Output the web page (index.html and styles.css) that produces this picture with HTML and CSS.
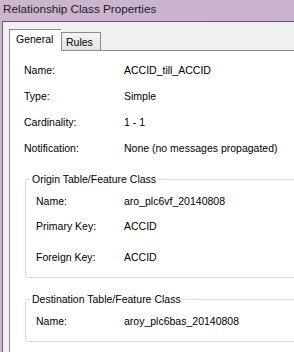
FILE: index.html
```html
<!DOCTYPE html>
<html lang="en">
<head>
  <meta charset="UTF-8">
  <title>Relationship Class Properties</title>
  <link rel="stylesheet" href="styles.css">
</head>
<body>

  <div class="window">
    <div class="titlebar">Relationship Class Properties</div>

    <div class="frame">
      <div class="tabs">
        <div class="tab active">General</div>
        <div class="tab">Rules</div>
      </div>

      <div class="panel">
        <div class="props">
          <div class="row"><span class="label">Name:</span><span>ACCID_till_ACCID</span></div>
          <div class="row"><span class="label">Type:</span><span>Simple</span></div>
          <div class="row"><span class="label">Cardinality:</span><span>1 - 1</span></div>
          <div class="row"><span class="label">Notification:</span><span>None (no messages propagated)</span></div>
        </div>

        <fieldset class="group">
          <legend>Origin Table/Feature Class</legend>
          <div class="row"><span class="label">Name:</span><span>aro_plc6vf_20140808</span></div>
          <div class="row"><span class="label">Primary Key:</span><span>ACCID</span></div>
          <div class="row wide"><span class="label">Foreign Key:</span><span>ACCID</span></div>
        </fieldset>

        <fieldset class="group last">
          <legend>Destination Table/Feature Class</legend>
          <div class="row"><span class="label">Name:</span><span>aroy_plc6bas_20140808</span></div>
        </fieldset>
      </div>
    </div>
  </div>

</body>
</html>
```

FILE: styles.css
```css
body {
  margin: 0;
  padding: 0;
  font-family: 'Liberation Sans', Arial, sans-serif;
  font-size: 10.5px;
  color: #000;
}

.window {
  width: 294px;
  height: 352px;
  overflow: hidden;
  background: linear-gradient(to right, #cdb5d0, #c9b2ce);
  display: flex;
  flex-direction: column;
}

.titlebar {
  height: 21px;
  line-height: 17px;
  padding-left: 3px;
  font-size: 11.7px;
  color: #1b1b1b;
  white-space: nowrap;
  flex-shrink: 0;
}

.frame {
  flex: 1;
  margin-left: 2px;
  border-top: 1px solid #5e5868;
  border-left: 1px solid #6a6670;
  background-color: #f0f0f0;
  padding: 8px 0 0 6px;
  width: 360px;
}

/* Tabs */
.tabs {
  display: flex;
  align-items: flex-end;
  height: 20px;
}

.tab {
  height: 17px;
  line-height: 18px;
  padding: 0 7px 0 4px;
  border: 1px solid #898c95;
  border-bottom: none;
  background: linear-gradient(#f4f4f4, #e3e3e3);
  white-space: nowrap;
}

.tab.active {
  height: 21px;
  line-height: 19px;
  width: 45px;
  padding: 0 0 0 6px;
  background: #fff;
  border-right: none;
  position: relative;
  z-index: 1;
  margin-bottom: -1px;
}

/* Page content */
.panel {
  background-color: #fff;
  border: 1px solid #898c95;
  border-right: none;
  height: 400px;
  padding: 9px 0 0 14px;
}

.row {
  display: flex;
  height: 20px;
  line-height: 20px;
  white-space: nowrap;
}

.props .row + .row {
  margin-top: 6px;
}

.props .label {
  width: 100px;
}

.group {
  margin: 14px 0 0 1px;
  padding: 5px 0 10px 10px;
  border: 1px solid #d5dfe5;
  border-radius: 3px;
}

.group.last {
  margin-top: 14px;
}

.group legend {
  margin-left: -6px;
  padding: 0 2px;
  line-height: 14px;
}

.group .label {
  width: 88px;
}

.group .row + .row {
  margin-top: 5px;
}

.group .row.wide {
  margin-top: 11px;
}
```
